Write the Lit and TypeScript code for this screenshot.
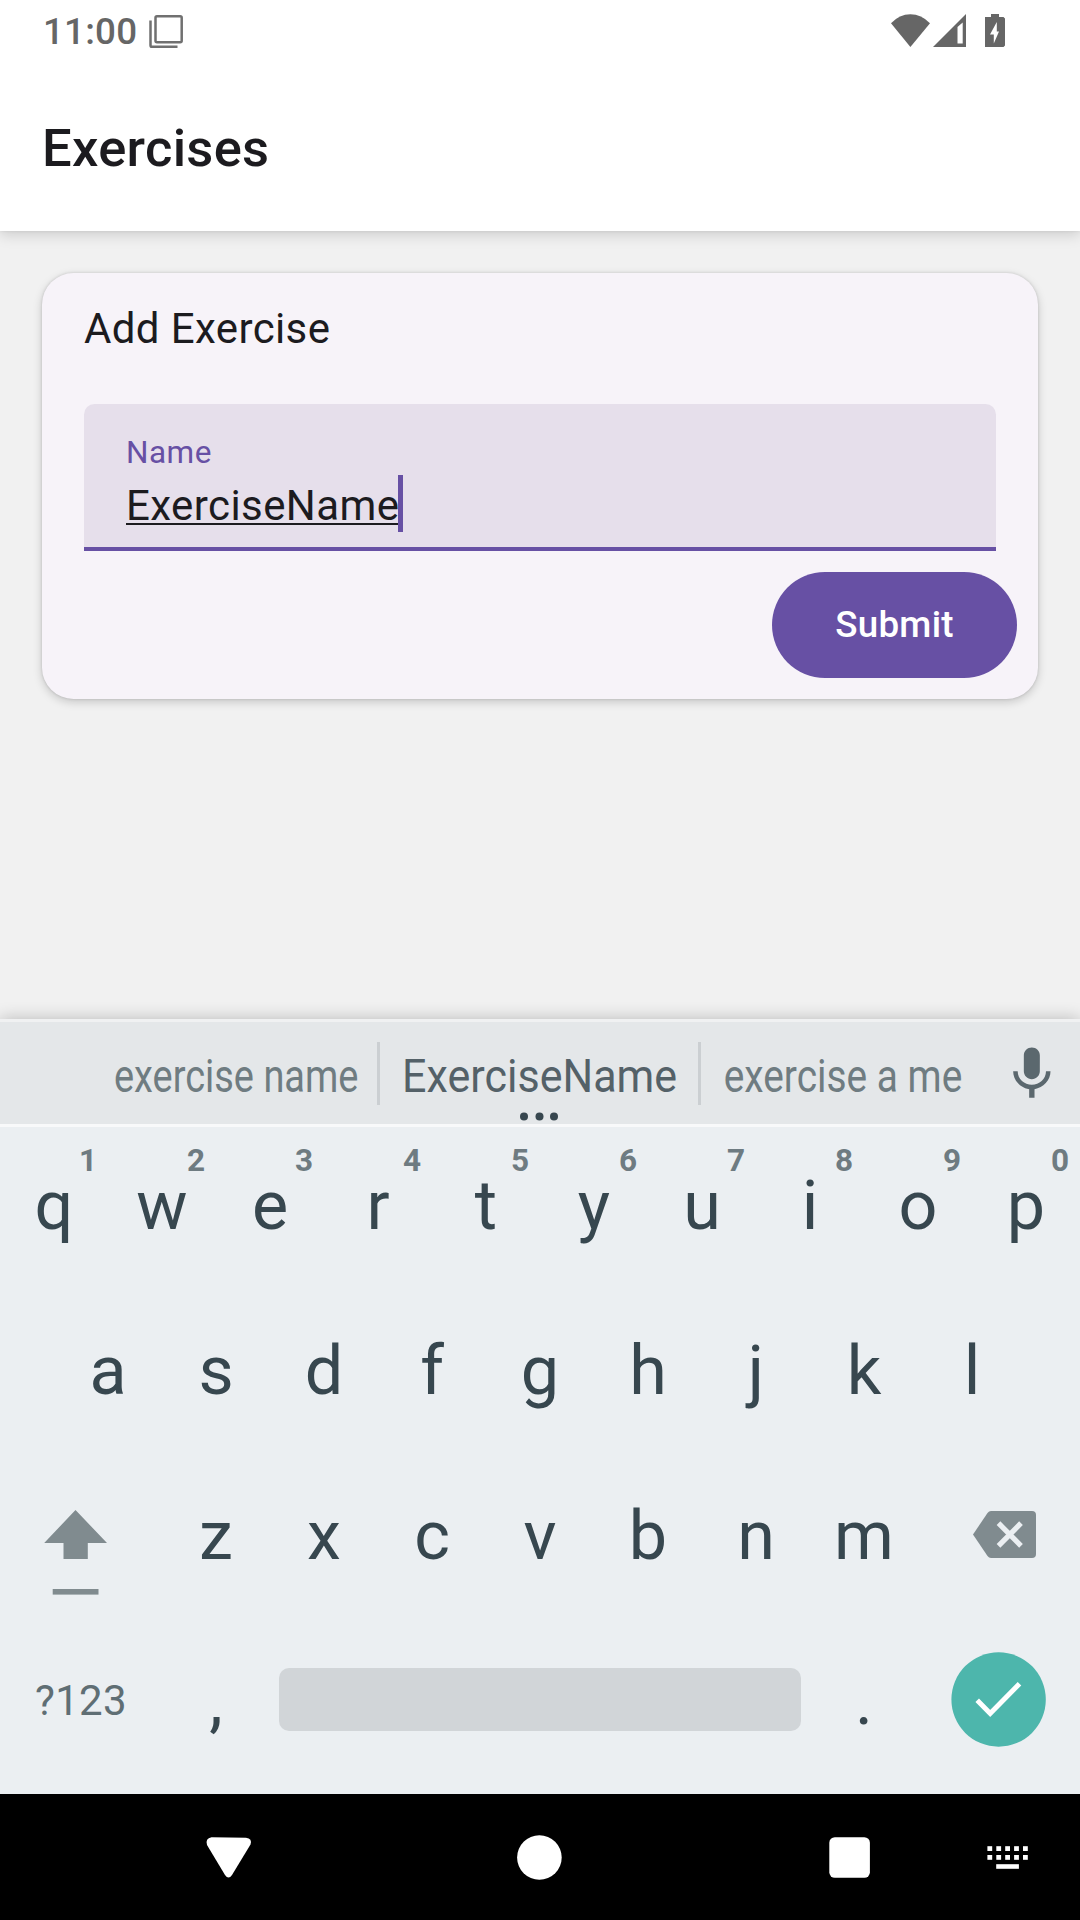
import { LitElement, html, svg, css } from "lit";
import { customElement, property } from "lit/decorators.js";

@customElement("status-bar")
class StatusBar extends LitElement {
  static styles = css`
    :host { display: flex; align-items: center; height: 63px; padding: 0 75px 0 43px; box-sizing: border-box; color: #666; }
    .time { font: 500 36.75px/63px Roboto, sans-serif; letter-spacing: 0.2px; margin-right: 11px; width: 95px; white-space: nowrap; }
    .spacer { flex: 1; }
    svg { display: block; }
    .wifi { margin-right: 3px; }
    .signal { margin-right: 19px; }
  `;
  render() {
    return html`
      <span class="time">11:00</span>
      <svg width="34" height="63" viewBox="149 0 34 63" fill="none" stroke="#707070" stroke-width="2.5">
        <rect x="155.5" y="16.2" width="26.2" height="26" rx="1.5"></rect>
        <path d="M150.5 20.5V45.2Q150.5 46.8 152 46.8H177.5"></path>
      </svg>
      <span class="spacer"></span>
      <svg class="wifi" width="39" height="63" viewBox="891 0 39 63">
        <path d="M910.4 47L891 23.2Q899.5 14.2 910.4 14.2T930 23.2Z" fill="#666"></path>
      </svg>
      <svg class="signal" width="33" height="63" viewBox="933 0 33 63">
        <path fill-rule="evenodd" d="M933 47L966 14V47ZM957.5 27V43.5H962.7V22.5Z" fill="#666"></path>
      </svg>
      <svg width="20" height="63" viewBox="985 0 20 63">
        <path fill-rule="evenodd" d="M991 14H999V17H1003.5L1005 18.5V45.5L1003.5 47H985V17H991ZM996.8 22L990 34.5H993.8V43.5L999 31.5H996.8Z" fill="#666"></path>
      </svg>
    `;
  }
}

@customElement("exercise-card")
class ExerciseCard extends LitElement {
  static styles = css`
    :host {
      display: flex; flex-direction: column; height: 426px; box-sizing: border-box; padding: 24px 0 21px;
      border-radius: 31.5px; background: #f7f3f9; color: #1c1b1f;
      box-shadow: 0 3px 10px rgba(0, 0, 0, 0.18), 0 0 3px rgba(0, 0, 0, 0.14);
      font-family: Roboto, sans-serif;
    }
    .title { font-size: 42px; line-height: 63px; letter-spacing: 0.38px; margin: 0 42px 44px; font-weight: 400; }
    .field {
      height: 147px; box-sizing: border-box; margin: 0 42px; padding: 27px 42px 0; background: #e6dfeb;
      border-bottom: 4px solid #6750a4; border-radius: 10.5px 10.5px 0 0;
    }
    .label { font-size: 31.5px; line-height: 44px; letter-spacing: 0.5px; color: #6750a4; }
    .entry { display: flex; align-items: flex-start; }
    .value { font-size: 42px; line-height: 61px; letter-spacing: 0.41px; height: 48px; border-bottom: 2px solid #1c1b1f; margin-right: -1px; }
    .caret { width: 5px; height: 57px; background: #6750a4; }
    .submit {
      align-self: flex-end; margin: 21px 21px 0 0; width: 245px; height: 106px; border: 0; padding: 0; border-radius: 53px;
      background: #6750a4; color: #fff; font: 500 36.75px/106px Roboto, sans-serif; letter-spacing: 0.26px;
    }
  `;
  render() {
    return html`
      <h2 class="title">Add Exercise</h2>
      <div class="field">
        <div class="label">Name</div>
        <div class="entry"><span class="value">ExerciseName</span><span class="caret"></span></div>
      </div>
      <button class="submit">Submit</button>
    `;
  }
}

@customElement("suggestion-strip")
class SuggestionStrip extends LitElement {
  static styles = css`
    :host {
      display: grid; grid-template-columns: 94px 283px 3px 318px 3px 284px 95px; height: 108px; box-sizing: border-box;
      border-top: 3px solid #f0f1f2; border-bottom: 3px solid #f8f9fa; background: #e4e7e9;
    }
    .line { background: #cbcfd2; height: 63px; margin-top: 20px; }
    svg { display: block; width: 100%; height: 102px; overflow: visible; }
    text { font: 46.5px Roboto, sans-serif; text-anchor: middle; }
    .side { fill: #6f7c81; }
    .main { fill: #546168; }
    .dots { fill: #37474f; }
  `;
  word(label: string, cell: number, center: number, width: number, kind: string, more = false) {
    return html`<svg viewBox="0 0 ${cell} 102">
      ${svg`<text class=${kind} x=${center} y="69.7" textLength=${width} lengthAdjust="spacingAndGlyphs">${label}</text>`}
      ${more ? [-15.5, 0, 14.5].map((d) => svg`<circle class="dots" cx=${159.5 + d} cy="94.5" r="4"></circle>`) : null}
    </svg>`;
  }
  render() {
    return html`
      <span></span>
      ${this.word("exercise name", 283, 142.2, 244.5, "side")}
      <span class="line"></span>
      ${this.word("ExerciseName", 318, 159.6, 275, "main", true)}
      <span class="line"></span>
      ${this.word("exercise a me", 284, 142, 238.5, "side")}
      <svg viewBox="985 1022 95 102">
        <g transform="translate(999.8 1042.2) scale(2.67 2.65)" fill="#5b686e">
          <path d="M12 14c1.66 0 2.99-1.34 2.99-3L15 5c0-1.66-1.34-3-3-3S9 3.34 9 5v6c0 1.66 1.34 3 3 3zm5.3-3c0 3-2.54 5.1-5.3 5.1S6.7 14 6.7 11H5c0 3.41 2.72 6.23 6 6.72V21h2v-3.28c3.28-.48 6-3.3 6-6.72h-1.7z"></path>
        </g>
      </svg>
    `;
  }
}

@customElement("key-cap")
class KeyCap extends LitElement {
  @property() label = "";
  @property() hint = "";
  static styles = css`
    :host { display: block; position: relative; width: 108px; height: 159px; text-align: center; color: #37474f; font-family: Roboto, sans-serif; }
    .label { display: block; font-size: 68.25px; line-height: 159px; }
    .hint { position: absolute; top: 15px; left: 68px; width: 40px; font-size: 31.5px; line-height: 38px; font-weight: 700; color: #6e7b81; }
  `;
  render() {
    return html`<span class="label">${this.label}</span>${this.hint ? html`<span class="hint">${this.hint}</span>` : null}`;
  }
}

@customElement("soft-keyboard")
class SoftKeyboard extends LitElement {
  static styles = css`
    :host { display: block; height: 667px; background: #ebeff2; }
    .row { display: flex; height: 165px; justify-content: center; }
    .icon { display: block; width: 162px; height: 157px; flex: none; }
    .symbols { width: 162px; text-align: center; font: 42px/157px Roboto, sans-serif; letter-spacing: 0.3px; color: #5f6e74; }
    .space { width: 522px; height: 63px; margin: 46px 9px 0; border-radius: 10px; background: #d1d5d8; }
  `;
  keys(letters: string, hints = "") {
    return [...letters].map((c, i) => html`<key-cap label=${c} hint=${hints[i] ?? ""}></key-cap>`);
  }
  render() {
    return html`
      <div class="row">${this.keys("qwertyuiop", "1234567890")}</div>
      <div class="row">${this.keys("asdfghjkl")}</div>
      <div class="row">
        <svg class="icon" viewBox="0 1457 162 157" fill="#808b8f">
          <path d="M75.5 1510L107 1543H87.8V1559H63.5V1543H44.2Z"></path>
          <rect x="52.7" y="1589" width="45.8" height="5.6"></rect>
        </svg>
        ${this.keys("zxcvbnm")}
        <svg class="icon" viewBox="918 1457 162 157">
          <path d="M991 1511H1032Q1036 1511 1036 1515V1554Q1036 1558 1032 1558H991Q989 1558 987.5 1556L973 1534.5L987.5 1513Q989 1511 991 1511Z" fill="#808b8f"></path>
          <path d="M998.5 1523.2L1021 1545.8M1021 1523.2L998.5 1545.8" stroke="#ebeff2" stroke-width="5.2"></path>
        </svg>
      </div>
      <div class="row">
        <span class="symbols">?123</span>
        ${this.keys(",")}
        <div class="space"></div>
        ${this.keys(".")}
        <svg class="icon" viewBox="918 1622 162 157">
          <circle cx="998.6" cy="1699.5" r="47.2" fill="#4db6ac"></circle>
          <path d="M977.2 1700.3L990.2 1713.5L1019.5 1683.7" fill="none" stroke="#fff" stroke-width="5"></path>
        </svg>
      </div>
    `;
  }
}

@customElement("nav-bar")
class NavBar extends LitElement {
  static styles = css`
    :host { display: block; height: 126px; background: #000; }
    svg { display: block; }
  `;
  render() {
    return html`<svg width="1080" height="126" viewBox="0 1794 1080 126" fill="#fff">
      <path d="M211.5 1837.2L246 1837.7Q252.5 1838.5 250.5 1844.5L232 1875Q228.5 1880 225 1875L207 1845Q205 1838.5 211.5 1837.2Z"></path>
      <circle cx="539.4" cy="1857.5" r="22.3"></circle>
      <rect x="829.3" y="1837.2" width="40.6" height="40.6" rx="5.5"></rect>
      ${[1846.2, 1855].map((y) => [0, 1, 2, 3, 4].map((i) => svg`<rect x=${987.4 + i * 8.9} y=${y} width="4.8" height="4.8"></rect>`))}
      <rect x="996.2" y="1864.2" width="22.7" height="4.6"></rect>
    </svg>`;
  }
}

@customElement("app-root")
class AppRoot extends LitElement {
  static styles = css`
    :host { display: flex; flex-direction: column; width: 1080px; height: 1920px; background: #f1f1f1; overflow: hidden; font-family: Roboto, sans-serif; }
    .header { height: 231px; background: #fff; box-shadow: 0 3px 14px rgba(0, 0, 0, 0.17), 0 0 3px rgba(0, 0, 0, 0.08); flex: none; }
    .heading { margin: 0; padding: 3px 42px 0; font-size: 52.5px; line-height: 165px; letter-spacing: 0.3px; font-weight: 500; color: #1c1b1f; }
    .content { flex: 1; padding: 42px; }
    .ime { flex: none; box-shadow: 0 0 16px rgba(0, 0, 0, 0.24); }
  `;
  render() {
    return html`
      <div class="header">
        <status-bar></status-bar>
        <h1 class="heading">Exercises</h1>
      </div>
      <div class="content"><exercise-card></exercise-card></div>
      <div class="ime">
        <suggestion-strip></suggestion-strip>
        <soft-keyboard></soft-keyboard>
      </div>
      <nav-bar></nav-bar>
    `;
  }
}
